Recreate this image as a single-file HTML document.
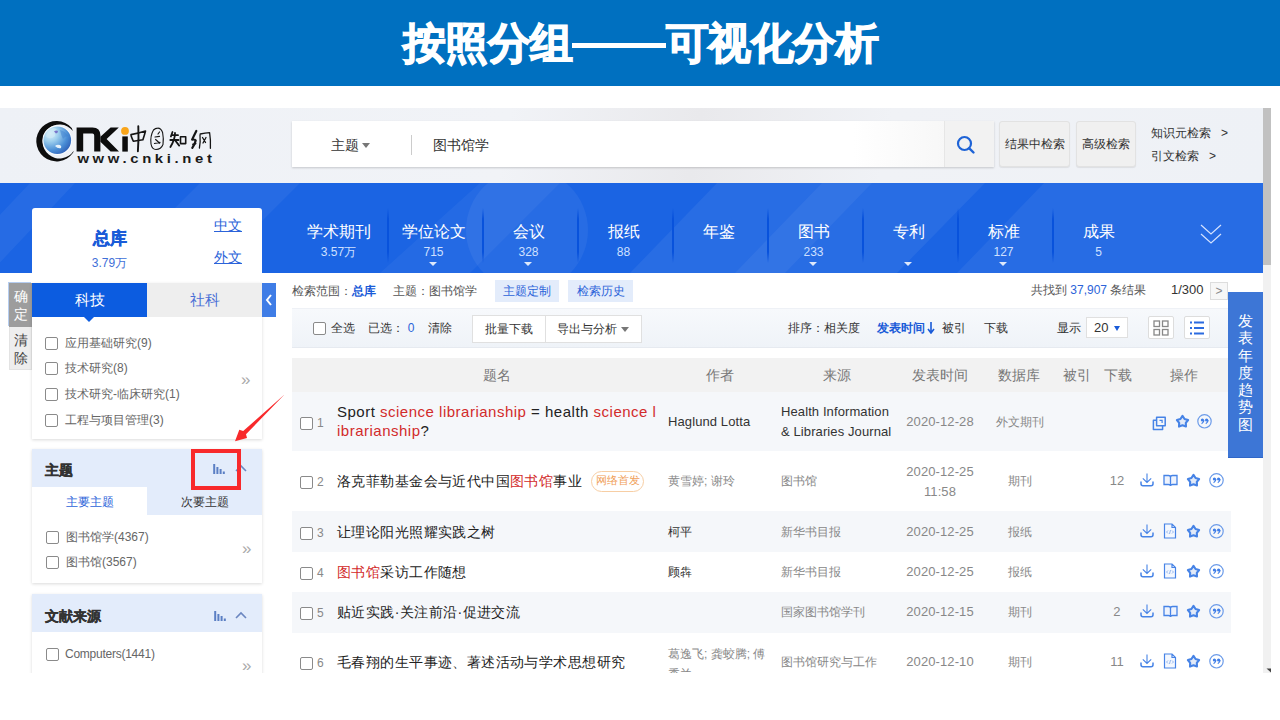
<!DOCTYPE html>
<html><head><meta charset="utf-8">
<style>
*{margin:0;padding:0;box-sizing:border-box}
html,body{width:1280px;height:720px;overflow:hidden;background:#fff;font-family:"Liberation Sans",sans-serif;color:#333}
.a{position:absolute;white-space:nowrap}
#title{left:0;top:0;width:1280px;height:86px;background:#0070c0}
.tl{color:#fff;font-weight:bold;font-size:43px;line-height:86px;letter-spacing:-.6px;-webkit-text-stroke:1.2px #fff}
#shot{left:0;top:0;width:1280px;height:673px;overflow:hidden}
#hdr{left:0;top:108px;width:1263px;height:75px;background:linear-gradient(100deg,#eef1f6 0%,#f1f3f7 40%,#e9e9ec 55%,#f0f2f6 70%,#eef1f6 100%)}
#nav{left:0;top:183px;width:1263px;height:90px;background:#1b64e3;overflow:hidden}
#sb{left:1263px;top:108px;width:8px;height:565px;background:#f1f1f1}
#sbt{left:1263px;top:108px;width:8px;height:157px;background:#c1c1c1}
.navi{top:0;width:95px;height:90px;text-align:center;color:#fff}
.navi .l{position:absolute;left:0;width:95px;top:40px;font-size:16px;line-height:18px}
.navi .n{position:absolute;left:0;width:95px;top:61.5px;font-size:12px;line-height:14px;color:#cfe0ff}
.navi .tri{position:absolute;left:43px;top:79px;width:0;height:0;border-left:4.5px solid transparent;border-right:4.5px solid transparent;border-top:4.5px solid rgba(255,255,255,.85)}
.sep{top:25px;width:2px;height:55px;margin-left:-0.5px;background:linear-gradient(180deg,rgba(8,80,220,0),#0852dc 20%,#0852dc 80%,rgba(8,80,220,0))}
.cb{width:13px;height:13px;border:1px solid #8a8a8a;border-radius:2px;background:#fff}
.it{font-size:12px;line-height:18px;color:#666}
.dbl{font-size:17px;line-height:16px;color:#aaa}
.th{top:366px;font-size:14px;line-height:18px;color:#777}
.num{font-size:12px;line-height:18px;color:#888}
.tt{font-size:14px;letter-spacing:.42px;line-height:18px;color:#222}
.td{font-size:12px;line-height:18px;color:#888}
.dk{color:#333}
.en{font-size:13px;letter-spacing:.1px}
.it.cp{letter-spacing:-.25px}
</style></head><body>
<div id="shot" class="a">
  <div id="hdr" class="a"></div>
  <svg class="a" style="left:30px;top:115px" width="190" height="55" viewBox="30 115 190 55">
    <defs><radialGradient id="gl" cx="0.25" cy="0.25" r="0.95"><stop offset="0" stop-color="#e2f3fb"/><stop offset="0.3" stop-color="#9fd0ee"/><stop offset="0.65" stop-color="#4a8ed6"/><stop offset="1" stop-color="#2752ad"/></radialGradient></defs>
    <path d="M71.75 127.95 A20.2 20.2 0 1 0 73.05 152.8 L73.76 150.76 A17 17 0 1 1 72.9 131 Z" fill="#0d0d0d"/>
    <circle cx="57.3" cy="140.3" r="14.8" fill="#f8fbfe"/><circle cx="57.3" cy="140.3" r="13.8" fill="url(#gl)"/>
    <path d="M46 136 q2-6 7-8 q3 0 4 2 q-3 3-2 6 q-3 3-6 2 q-2 0-3-2z" fill="#cfe9f7" opacity=".7"/><path d="M60 130 q5 1 8 6 q-3 0-5 3 q-2-4-3-9z" fill="#3d7fd0" opacity=".5"/>
    <path d="M55 146 q2-2 5-1 q2 1 1 3 q-3 1-6-2z" fill="#e6f2fb"/>
    <path d="M54 131.5 q2-1.5 4-.5 q0 2-2 2.5z" fill="#6a5bc0" opacity=".8"/>
    <path d="M76.6 151.6 V127.4 H92.5 Q100.4 127.4 100.4 135.5 V151.6 H94.2 V135.6 Q94.2 133.6 92.4 133.6 H83.2 V151.6 Z" fill="#0d0d0d"/>
    <path d="M100.4 136.8 L110.6 127.4 H118.8 L106.6 138.9 L119 151.6 H110.6 L100.4 141.8 Z" fill="#0d0d0d"/>
    <rect x="122.3" y="136.4" width="5.5" height="15.2" fill="#0d0d0d"/>
    <circle cx="125" cy="130.9" r="3.9" fill="#f9a51a"/>
    <g fill="none" stroke="#151515" stroke-linecap="round" stroke-linejoin="round">
      <path d="M131 135.5 q1 3 2.3 5.6 M131 134.6 q7-1.2 14.5-3.6 q-1 4-2.6 8.8 M133.5 141.2 q4.5-.6 9.5-1.4" stroke-width="1.6"/>
      <path d="M138.3 126.3 q.6 12 -.4 25" stroke-width="1.9"/>
      <path d="M153.5 130 q-3.5 6-2.5 14 q1 5.5 5 5.5 q5 0 7-5 q.8-6-.4-12 q-1.6-4.6-5-4.4 q-2.2 0-4.1 1.9z" stroke-width="1.1"/>
      <path d="M155 137 l4.5-.6 M155.6 139.5 q2.5 2 4 3.8 M158 134 l1.5 -2 M154.5 143.5 l5.5-1.2" stroke-width="1.2"/>
      <path d="M172.5 132 l-1.6 4.5 M172 135.2 h6 M170.3 140 h8.2 M175 133 q.2 6-4.6 14 M175.6 141 l3.6 4.6" stroke-width="1.8"/>
      <path d="M180.5 136.8 h5.2 v6.8 h-5.2 z" stroke-width="1.6"/>
      <path d="M196.3 131 q-2.5 5-4.2 8.6 q2.6-.4 3.6.8 q-1 4-3.4 7.4 M193.2 144.5 l2.2 -1" stroke-width="2.2"/>
      <path d="M200 135 q.6 7-.6 13 M200.2 134 q5-1 9.4-1.3 q1.2 7 .8 15.6 M202.5 137.5 l3 5 M206 137.5 l-3 5.5" stroke-width="1.3"/>
    </g>
    <text transform="translate(77.4 162.5) scale(1.18 1)" x="0" y="0" font-family="Liberation Sans" font-weight="bold" font-size="12.6" fill="#1a1a1a" textLength="114" lengthAdjust="spacing">www.cnki.net</text>
  </svg>
  <div class="a" style="left:292px;top:121px;width:702px;height:46px;background:linear-gradient(90deg,#fff 0%,#fff 80%,#f3f3f3 100%);box-shadow:0 1px 2px rgba(0,0,0,.18)"></div>
  <div class="a" style="left:331px;top:136px;font-size:14px;line-height:18px;color:#333">主题</div>
  <div class="a" style="left:362px;top:143px;width:0;height:0;border-left:4.5px solid transparent;border-right:4.5px solid transparent;border-top:5px solid #777"></div>
  <div class="a" style="left:411px;top:135px;width:1px;height:20px;background:#ccc"></div>
  <div class="a" style="left:433px;top:136px;font-size:14px;line-height:18px;color:#333">图书馆学</div>
  <div class="a" style="left:944px;top:121px;width:50px;height:46px;background:#f2f2f2;border-left:1px solid #e6e6e6;border-radius:0 3px 3px 0"></div>
  <svg class="a" style="left:955px;top:134px" width="22" height="22" viewBox="0 0 22 22"><circle cx="9.5" cy="9.5" r="6.5" fill="none" stroke="#1e63d6" stroke-width="2.2"/><path d="M14.3 14.3 L18.5 18.5" stroke="#1e63d6" stroke-width="2.4" stroke-linecap="round"/></svg>
  <div class="a" style="left:999px;top:121px;width:71px;height:46px;background:#f0f0f0;border:1px solid #e2e2e2;border-radius:3px;box-shadow:0 1px 1px rgba(0,0,0,.08);font-size:12px;line-height:44px;text-align:center;color:#333">结果中检索</div>
  <div class="a" style="left:1076px;top:121px;width:60px;height:46px;background:#f0f0f0;border:1px solid #e2e2e2;border-radius:3px;box-shadow:0 1px 1px rgba(0,0,0,.08);font-size:12px;line-height:44px;text-align:center;color:#333">高级检索</div>
  <div class="a" style="left:1151px;top:125px;font-size:12px;line-height:16px;color:#333">知识元检索&nbsp;&nbsp;&nbsp;&gt;</div>
  <div class="a" style="left:1151px;top:148px;font-size:12px;line-height:16px;color:#333">引文检索&nbsp;&nbsp;&nbsp;&gt;</div>
  <div id="nav" class="a">
    <div class="a" style="left:0;top:0;width:1263px;height:90px;background:rgba(255,255,255,0.05);clip-path:polygon(30px 0,75px 0,-10px 90px,-55px 90px)"></div>
    <div class="a" style="left:0;top:0;width:1263px;height:90px;background:rgba(255,255,255,0.05);clip-path:polygon(200px 0,300px 0,210px 90px,110px 90px)"></div>
    <div class="a" style="left:466px;top:-14px;width:122px;height:122px;border-radius:50%;background:rgba(255,255,255,.055)"></div>
    <div class="a" style="left:0;top:0;width:1263px;height:90px;background:rgba(255,255,255,.045);clip-path:polygon(480px 0,560px 0,470px 90px,380px 90px)"></div>
    <div class="a" style="left:0;top:0;width:1263px;height:90px;background:rgba(255,255,255,0.06);clip-path:polygon(717px 0,985px 0,897px 90px,630px 90px)"></div>
    <div class="a" style="left:0;top:0;width:1263px;height:90px;background:rgba(255,255,255,0.05);clip-path:polygon(822px 0,872px 0,785px 90px,735px 90px)"></div>
    <div class="a" style="left:0;top:0;width:1263px;height:90px;background:rgba(255,255,255,0.055);clip-path:polygon(1044px 0,1263px 0,1263px 90px,957px 90px)"></div>
    <div class="a navi" style="left:291px"><div class="l">学术期刊</div><div class="n">3.57万</div></div>
    <div class="a navi" style="left:386px"><div class="l">学位论文</div><div class="n">715</div><div class="tri"></div></div>
    <div class="a sep" style="left:387px"></div>
    <div class="a navi" style="left:481px"><div class="l">会议</div><div class="n">328</div><div class="tri"></div></div>
    <div class="a sep" style="left:482px"></div>
    <div class="a navi" style="left:576px"><div class="l">报纸</div><div class="n">88</div></div>
    <div class="a sep" style="left:577px"></div>
    <div class="a navi" style="left:671px"><div class="l">年鉴</div></div>
    <div class="a sep" style="left:672px"></div>
    <div class="a navi" style="left:766px"><div class="l">图书</div><div class="n">233</div><div class="tri"></div></div>
    <div class="a sep" style="left:767px"></div>
    <div class="a navi" style="left:861px"><div class="l">专利</div><div class="tri"></div></div>
    <div class="a sep" style="left:862px"></div>
    <div class="a navi" style="left:956px"><div class="l">标准</div><div class="n">127</div><div class="tri"></div></div>
    <div class="a sep" style="left:957px"></div>
    <div class="a navi" style="left:1051px"><div class="l">成果</div><div class="n">5</div></div>
    <div class="a sep" style="left:1052px"></div>
    <svg class="a" style="left:1199px;top:39px" width="24" height="24" viewBox="0 0 24 24"><path d="M2 3 L12 12 L22 3 M2 12 L12 21 L22 12" fill="none" stroke="#d4e2ff" stroke-width="1.2"/></svg>
  </div>
  <!-- card -->
  <div class="a" style="left:32px;top:208px;width:230px;height:75px;background:#fff;border-radius:3px 3px 0 0"></div>
  <div class="a" style="left:92px;top:229px;width:35px;text-align:center;font-size:17px;line-height:20px;font-weight:bold;color:#1a5bd8;-webkit-text-stroke:.4px #1a5bd8">总库</div>
  <div class="a" style="left:82px;top:255px;width:55px;text-align:center;font-size:12px;line-height:16px;color:#3e6fd8">3.79万</div>
  <div class="a" style="left:214px;top:216px;font-size:14px;line-height:18px;color:#2b63d9;text-decoration:underline">中文</div>
  <div class="a" style="left:214px;top:248px;font-size:14px;line-height:18px;color:#2b63d9;text-decoration:underline">外文</div>
  <!-- left mini buttons -->
  <div class="a" style="left:9px;top:283px;width:23px;height:44px;background:#9d9d9d;box-shadow:-1px -1px 0 #b5cdf0;color:#fff;font-size:14px;line-height:18px;text-align:center;padding-top:4px;white-space:normal">确<br>定</div>
  <div class="a" style="left:9px;top:327px;width:23px;height:43px;background:#eeeeee;color:#444;font-size:14px;line-height:18px;text-align:center;padding-top:4px;border:1px solid #e3e3e3;border-top:0">清<br>除</div>
  <!-- panel 1 -->
  <div class="a" style="left:32px;top:283px;width:230px;height:156px;background:#fff;box-shadow:0 1px 3px rgba(0,0,0,.15)"></div>
  <div class="a" style="left:32px;top:283px;width:115px;height:34px;background:#0c5ce0;color:#fff;font-size:15px;line-height:34px;text-align:center">科技</div>
  <div class="a" style="left:84px;top:317px;width:0;height:0;border-left:5px solid transparent;border-right:5px solid transparent;border-top:5px solid #0c5ce0"></div>
  <div class="a" style="left:147px;top:283px;width:115px;height:34px;background:#eeeeee;color:#4a6fd6;font-size:15px;line-height:34px;text-align:center">社科</div>
  <div class="a" style="left:262px;top:283px;width:14px;height:34px;background:#3f7de6"></div>
  <svg class="a" style="left:262px;top:283px" width="14" height="34" viewBox="0 0 14 34"><path d="M9 12 L5 17 L9 22" fill="none" stroke="#fff" stroke-width="2"/></svg>
  <div class="a cb" style="left:45px;top:337px"></div><div class="a it" style="left:65px;top:334px">应用基础研究(9)</div>
  <div class="a cb" style="left:45px;top:362px"></div><div class="a it" style="left:65px;top:359px">技术研究(8)</div>
  <div class="a cb" style="left:45px;top:388px"></div><div class="a it" style="left:65px;top:385px">技术研究-临床研究(1)</div>
  <div class="a cb" style="left:45px;top:414px"></div><div class="a it" style="left:65px;top:411px">工程与项目管理(3)</div>
  <div class="a dbl" style="left:241px;top:372px">&raquo;</div>
  <!-- panel 2 -->
  <div class="a" style="left:32px;top:449px;width:230px;height:134px;background:#fff;box-shadow:0 1px 3px rgba(0,0,0,.15)"></div>
  <div class="a" style="left:32px;top:449px;width:230px;height:38px;background:#e3ecfb"></div>
  <div class="a" style="left:45px;top:460px;font-size:14px;line-height:20px;font-weight:bold;color:#333;-webkit-text-stroke:.3px #333">主题</div>
  <svg class="a bars" style="left:213px;top:464px" width="13" height="10" viewBox="0 0 13 10"><path d="M1.2 0v10M4.4 3v7M7.6 5v5M10.8 7.5v2.5" stroke="#5b7fc4" stroke-width="2"/></svg>
  <svg class="a" style="left:235px;top:464px" width="12" height="8" viewBox="0 0 12 8"><path d="M1 7 L6 2 L11 7" fill="none" stroke="#6b86c0" stroke-width="1.6"/></svg>
  <div class="a" style="left:32px;top:487px;width:115px;height:28px;background:#fff;color:#2b63d9;font-size:12px;line-height:30px;text-align:center">主要主题</div>
  <div class="a" style="left:147px;top:487px;width:115px;height:28px;background:#e3ecfb;color:#333;font-size:12px;line-height:30px;text-align:center">次要主题</div>
  <div class="a cb" style="left:46px;top:531px"></div><div class="a it" style="left:66px;top:528px">图书馆学(4367)</div>
  <div class="a cb" style="left:46px;top:556px"></div><div class="a it" style="left:66px;top:553px">图书馆(3567)</div>
  <div class="a dbl" style="left:242px;top:541px">&raquo;</div>
  <div class="a" style="left:191px;top:449px;width:50px;height:41px;border:4px solid #f8292b"></div>
  <!-- panel 3 -->
  <div class="a" style="left:32px;top:594px;width:230px;height:120px;background:#fff;box-shadow:0 1px 3px rgba(0,0,0,.15)"></div>
  <div class="a" style="left:32px;top:594px;width:230px;height:38px;background:#e3ecfb"></div>
  <div class="a" style="left:45px;top:606px;font-size:14px;line-height:20px;font-weight:bold;color:#333;-webkit-text-stroke:.3px #333">文献来源</div>
  <svg class="a bars" style="left:214px;top:611px" width="13" height="10" viewBox="0 0 13 10"><path d="M1.2 0v10M4.4 3v7M7.6 5v5M10.8 7.5v2.5" stroke="#5b7fc4" stroke-width="2"/></svg>
  <svg class="a" style="left:235px;top:611px" width="12" height="8" viewBox="0 0 12 8"><path d="M1 7 L6 2 L11 7" fill="none" stroke="#6b86c0" stroke-width="1.6"/></svg>
  <div class="a cb" style="left:46px;top:648px"></div><div class="a it cp" style="left:65px;top:645px">Computers(1441)</div>
  <div class="a dbl" style="left:242px;top:658px">&raquo;</div>
  <!-- red arrow -->
  <svg class="a" style="left:225px;top:385px" width="70" height="65" viewBox="225 385 70 65"><path d="M284.5 394.5 L246 434.3 L247 438 L235 441.3 L239.3 429.8 L243.2 431 Z" fill="#f8292b"/></svg>
  <!-- content -->
  <div class="a" style="left:292px;top:283px;font-size:12px;line-height:16px;color:#555">检索范围：<b style="color:#1a5bd8">总库</b>&nbsp;&nbsp;&nbsp;&nbsp;&nbsp;主题：图书馆学</div>
  <div class="a" style="left:495px;top:280px;width:64px;height:22px;background:#e3ecfb;color:#2b63d9;font-size:12px;line-height:22px;text-align:center">主题定制</div>
  <div class="a" style="left:568px;top:280px;width:65px;height:22px;background:#e3ecfb;color:#2b63d9;font-size:12px;line-height:22px;text-align:center">检索历史</div>
  <div class="a" style="left:1031px;top:282px;font-size:12px;line-height:16px;color:#555">共找到 <span style="color:#2b63d9">37,907</span> 条结果</div>
  <div class="a" style="left:1171px;top:282px;font-size:13px;line-height:16px;color:#333">1/300</div>
  <div class="a" style="left:1210px;top:282px;width:18px;height:18px;border:1px solid #ddd;background:#f7f7f7;color:#888;font-size:12px;line-height:16px;text-align:center">&gt;</div>
  <!-- toolbar -->
  <div class="a" style="left:292px;top:308px;width:936px;height:40px;background:linear-gradient(180deg,#f7f9fc,#eff3f8);border-top:1px solid #eef1f6;border-bottom:1px solid #e6eaf0"></div>
  <div class="a cb" style="left:313px;top:322px"></div>
  <div class="a" style="left:331px;top:320px;font-size:12px;line-height:16px;color:#333">全选&nbsp;&nbsp;&nbsp;&nbsp;已选：&nbsp;<span style="color:#2b63d9">0</span>&nbsp;&nbsp;&nbsp;&nbsp;清除</div>
  <div class="a" style="left:472px;top:315px;width:74px;height:28px;background:#fff;border:1px solid #e0e0e0;font-size:12px;line-height:26px;text-align:center;color:#333">批量下载</div>
  <div class="a" style="left:545px;top:315px;width:97px;height:28px;background:#fff;border:1px solid #e0e0e0;font-size:12px;line-height:26px;color:#333;padding-left:11px">导出与分析</div>
  <div class="a" style="left:621px;top:327px;width:0;height:0;border-left:4px solid transparent;border-right:4px solid transparent;border-top:5px solid #777"></div>
  <div class="a" style="left:788px;top:320px;font-size:12px;line-height:16px;color:#333">排序：相关度</div>
  <div class="a" style="left:877px;top:320px;font-size:12px;line-height:16px;color:#1a5bd8;font-weight:bold">发表时间</div>
  <svg class="a" style="left:927px;top:322px" width="8" height="12" viewBox="0 0 8 12"><path d="M4 0v10M1 7l3 4 3-4" fill="none" stroke="#1a5bd8" stroke-width="1.6"/></svg>
  <div class="a" style="left:942px;top:320px;font-size:12px;line-height:16px;color:#333">被引</div>
  <div class="a" style="left:984px;top:320px;font-size:12px;line-height:16px;color:#333">下载</div>
  <div class="a" style="left:1057px;top:320px;font-size:12px;line-height:16px;color:#333">显示</div>
  <div class="a" style="left:1086px;top:317px;width:42px;height:21px;background:#fff;border:1px solid #e0e0e0;font-size:13px;line-height:20px;color:#333;padding-left:7px">20</div>
  <div class="a" style="left:1114px;top:326px;width:0;height:0;border-left:3.5px solid transparent;border-right:3.5px solid transparent;border-top:5px solid #1a5bd8"></div>
  <div class="a" style="left:1148px;top:316px;width:26px;height:23px;background:#fff;border:1px solid #ddd;border-radius:2px"></div>
  <svg class="a" style="left:1153px;top:320px" width="16" height="16" viewBox="0 0 16 16"><rect x="1" y="1" width="5.5" height="5.5" fill="none" stroke="#888" stroke-width="1.3"/><rect x="9.5" y="1" width="5.5" height="5.5" fill="none" stroke="#888" stroke-width="1.3"/><rect x="1" y="9.5" width="5.5" height="5.5" fill="none" stroke="#888" stroke-width="1.3"/><rect x="9.5" y="9.5" width="5.5" height="5.5" fill="none" stroke="#888" stroke-width="1.3"/></svg>
  <div class="a" style="left:1184px;top:316px;width:26px;height:23px;background:#fff;border:1px solid #ddd;border-radius:2px"></div>
  <svg class="a" style="left:1189px;top:320px" width="16" height="16" viewBox="0 0 16 16"><path d="M1 2.5h2M5 2.5h10M1 8h2M5 8h10M1 13.5h2M5 13.5h10" stroke="#2b6be0" stroke-width="2"/></svg>
  <!-- rows -->
  <div class="a" style="left:292px;top:392px;width:939px;height:59px;background:#f5f7fa"></div>
  <div class="a" style="left:292px;top:511px;width:939px;height:41px;background:#f5f7fa"></div>
  <div class="a" style="left:292px;top:592px;width:939px;height:41px;background:#f5f7fa"></div>
  <div class="a cb" style="left:300px;top:417px"></div>
  <div class="a num" style="left:317px;top:414px">1</div>
  <div class="a tt" style="left:337px;top:402px;line-height:19px;font-size:15px;letter-spacing:.5px">Sport <span style="color:#d22b2b">science librarianship</span> = health <span style="color:#d22b2b">science l</span><br><span style="color:#d22b2b">ibrarianship</span>?</div>
  <div class="a td dk en" style="left:668px;top:413px;">Haglund Lotta</div>
  <div class="a td dk en" style="left:781px;top:402px;line-height:20px">Health Information<br>&amp; Libraries Journal</div>
  <div class="a td en" style="left:890px;width:100px;text-align:center;top:413px">2020-12-28</div>
  <div class="a td" style="left:970px;width:100px;text-align:center;top:413px">外文期刊</div>
  <svg class="a" style="left:1152px;top:416px" width="15" height="15" viewBox="0 0 15 15"><path d="M4.6 1.2h8.6v8.6H4.6z" fill="none" stroke="#4683e6" stroke-width="1.5" stroke-linejoin="round"/><path d="M4.6 4.3H1.4v9.2h9.2V9.8" fill="none" stroke="#4683e6" stroke-width="1.5" stroke-linejoin="round"/><path d="M7.5 4.3h2.6v2.6" fill="none" stroke="#4683e6" stroke-width="1.2"/></svg>
  <svg class="a" style="left:1175px;top:414px" width="15" height="15" viewBox="0 0 15 15"><path d="M7.50 1.90 L9.56 4.97 L13.11 5.98 L10.83 8.88 L10.97 12.57 L7.50 11.30 L4.03 12.57 L4.17 8.88 L1.89 5.98 L5.44 4.97Z" fill="#e2eaf8" stroke="#4683e6" stroke-width="2.1" stroke-linejoin="round"/></svg>
  <svg class="a" style="left:1197px;top:414px" width="15" height="15" viewBox="0 0 15 15"><circle cx="7.5" cy="7.3" r="6.7" fill="none" stroke="#6b9be9" stroke-width="1.2"/><circle cx="5.4" cy="6" r="1.6" fill="#3f7ee8"/><circle cx="9.6" cy="6" r="1.6" fill="#3f7ee8"/><path d="M6.9 6.1q0 2.4-2.3 3.6M11.1 6.1q0 2.4-2.3 3.6" fill="none" stroke="#3f7ee8" stroke-width="1.2"/></svg>
  <div class="a cb" style="left:300px;top:476px"></div>
  <div class="a num" style="left:317px;top:473px">2</div>
  <div class="a tt" style="left:337px;top:472px;">洛克菲勒基金会与近代中国<span style="color:#d22b2b">图书馆</span>事业</div>
  <div class="a" style="left:591px;top:471px;width:53px;height:20.5px;border:1.5px solid #f7cea4;border-radius:11px;color:#f0a058;font-size:11px;line-height:17.5px;text-align:center">网络首发</div>
  <div class="a td" style="left:668px;top:472px;">黄雪婷; 谢玲</div>
  <div class="a td" style="left:781px;top:472px;">图书馆</div>
  <div class="a td en" style="left:890px;width:100px;text-align:center;top:462px;line-height:20px">2020-12-25<br>11:58</div>
  <div class="a td" style="left:970px;width:100px;text-align:center;top:472px">期刊</div>
  <div class="a td en" style="left:1092px;width:50px;text-align:center;top:472px">12</div>
  <svg class="a" style="left:1140px;top:473px" width="14" height="14" viewBox="0 0 14 14"><path d="M7 0.5v9M2.8 5.3l4.2 4.2 4.2-4.2" fill="none" stroke="#4683e6" stroke-width="1.1"/><path d="M1 8.6v2.2q0 2 2 2h8q2 0 2-2V8.6" fill="none" stroke="#4683e6" stroke-width="1.5"/></svg>
  <svg class="a" style="left:1163px;top:473px" width="15" height="14" viewBox="0 0 15 14"><path d="M1 2.5h4.5q2 0 2 2v8.5q0-1.5-2-1.5H1zM14 2.5H9.5q-2 0-2 2v8.5q0-1.5 2-1.5H14z" fill="#eef3fd" stroke="#4683e6" stroke-width="1.3"/></svg>
  <svg class="a" style="left:1186px;top:473px" width="15" height="15" viewBox="0 0 15 15"><path d="M7.50 1.90 L9.56 4.97 L13.11 5.98 L10.83 8.88 L10.97 12.57 L7.50 11.30 L4.03 12.57 L4.17 8.88 L1.89 5.98 L5.44 4.97Z" fill="#e2eaf8" stroke="#4683e6" stroke-width="2.1" stroke-linejoin="round"/></svg>
  <svg class="a" style="left:1209px;top:473px" width="15" height="15" viewBox="0 0 15 15"><circle cx="7.5" cy="7.3" r="6.7" fill="none" stroke="#6b9be9" stroke-width="1.2"/><circle cx="5.4" cy="6" r="1.6" fill="#3f7ee8"/><circle cx="9.6" cy="6" r="1.6" fill="#3f7ee8"/><path d="M6.9 6.1q0 2.4-2.3 3.6M11.1 6.1q0 2.4-2.3 3.6" fill="none" stroke="#3f7ee8" stroke-width="1.2"/></svg>
  <div class="a cb" style="left:300px;top:527px"></div>
  <div class="a num" style="left:317px;top:524px">3</div>
  <div class="a tt" style="left:337px;top:523px;">让理论阳光照耀实践之树</div>
  <div class="a td dk" style="left:668px;top:523px;">柯平</div>
  <div class="a td" style="left:781px;top:523px;">新华书目报</div>
  <div class="a td en" style="left:890px;width:100px;text-align:center;top:523px">2020-12-25</div>
  <div class="a td" style="left:970px;width:100px;text-align:center;top:523px">报纸</div>
  <svg class="a" style="left:1140px;top:524px" width="14" height="14" viewBox="0 0 14 14"><path d="M7 0.5v9M2.8 5.3l4.2 4.2 4.2-4.2" fill="none" stroke="#4683e6" stroke-width="1.1"/><path d="M1 8.6v2.2q0 2 2 2h8q2 0 2-2V8.6" fill="none" stroke="#4683e6" stroke-width="1.5"/></svg>
  <svg class="a" style="left:1163px;top:523px" width="14" height="16" viewBox="0 0 14 16"><path d="M1.5 1h7.5l3.5 3.5v10.5h-11z M9 1v3.5h3.5" fill="#f4f8fe" stroke="#4683e6" stroke-width="1.2"/><path d="M5 7.5l-1.5 1.5 1.5 1.5M9 7.5l1.5 1.5-1.5 1.5M7.5 7l-1 4" fill="none" stroke="#7aa3e8" stroke-width=".8"/></svg>
  <svg class="a" style="left:1186px;top:524px" width="15" height="15" viewBox="0 0 15 15"><path d="M7.50 1.90 L9.56 4.97 L13.11 5.98 L10.83 8.88 L10.97 12.57 L7.50 11.30 L4.03 12.57 L4.17 8.88 L1.89 5.98 L5.44 4.97Z" fill="#e2eaf8" stroke="#4683e6" stroke-width="2.1" stroke-linejoin="round"/></svg>
  <svg class="a" style="left:1209px;top:524px" width="15" height="15" viewBox="0 0 15 15"><circle cx="7.5" cy="7.3" r="6.7" fill="none" stroke="#6b9be9" stroke-width="1.2"/><circle cx="5.4" cy="6" r="1.6" fill="#3f7ee8"/><circle cx="9.6" cy="6" r="1.6" fill="#3f7ee8"/><path d="M6.9 6.1q0 2.4-2.3 3.6M11.1 6.1q0 2.4-2.3 3.6" fill="none" stroke="#3f7ee8" stroke-width="1.2"/></svg>
  <div class="a cb" style="left:300px;top:567px"></div>
  <div class="a num" style="left:317px;top:564px">4</div>
  <div class="a tt" style="left:337px;top:563px;"><span style="color:#d22b2b">图书馆</span>采访工作随想</div>
  <div class="a td dk" style="left:668px;top:563px;">顾犇</div>
  <div class="a td" style="left:781px;top:563px;">新华书目报</div>
  <div class="a td en" style="left:890px;width:100px;text-align:center;top:563px">2020-12-25</div>
  <div class="a td" style="left:970px;width:100px;text-align:center;top:563px">报纸</div>
  <svg class="a" style="left:1140px;top:564px" width="14" height="14" viewBox="0 0 14 14"><path d="M7 0.5v9M2.8 5.3l4.2 4.2 4.2-4.2" fill="none" stroke="#4683e6" stroke-width="1.1"/><path d="M1 8.6v2.2q0 2 2 2h8q2 0 2-2V8.6" fill="none" stroke="#4683e6" stroke-width="1.5"/></svg>
  <svg class="a" style="left:1163px;top:563px" width="14" height="16" viewBox="0 0 14 16"><path d="M1.5 1h7.5l3.5 3.5v10.5h-11z M9 1v3.5h3.5" fill="#f4f8fe" stroke="#4683e6" stroke-width="1.2"/><path d="M5 7.5l-1.5 1.5 1.5 1.5M9 7.5l1.5 1.5-1.5 1.5M7.5 7l-1 4" fill="none" stroke="#7aa3e8" stroke-width=".8"/></svg>
  <svg class="a" style="left:1186px;top:564px" width="15" height="15" viewBox="0 0 15 15"><path d="M7.50 1.90 L9.56 4.97 L13.11 5.98 L10.83 8.88 L10.97 12.57 L7.50 11.30 L4.03 12.57 L4.17 8.88 L1.89 5.98 L5.44 4.97Z" fill="#e2eaf8" stroke="#4683e6" stroke-width="2.1" stroke-linejoin="round"/></svg>
  <svg class="a" style="left:1209px;top:564px" width="15" height="15" viewBox="0 0 15 15"><circle cx="7.5" cy="7.3" r="6.7" fill="none" stroke="#6b9be9" stroke-width="1.2"/><circle cx="5.4" cy="6" r="1.6" fill="#3f7ee8"/><circle cx="9.6" cy="6" r="1.6" fill="#3f7ee8"/><path d="M6.9 6.1q0 2.4-2.3 3.6M11.1 6.1q0 2.4-2.3 3.6" fill="none" stroke="#3f7ee8" stroke-width="1.2"/></svg>
  <div class="a cb" style="left:300px;top:607px"></div>
  <div class="a num" style="left:317px;top:604px">5</div>
  <div class="a tt" style="left:337px;top:603px;">贴近实践·关注前沿·促进交流</div>
  <div class="a td" style="left:781px;top:603px;">国家图书馆学刊</div>
  <div class="a td en" style="left:890px;width:100px;text-align:center;top:603px">2020-12-15</div>
  <div class="a td" style="left:970px;width:100px;text-align:center;top:603px">期刊</div>
  <div class="a td en" style="left:1092px;width:50px;text-align:center;top:603px">2</div>
  <svg class="a" style="left:1140px;top:604px" width="14" height="14" viewBox="0 0 14 14"><path d="M7 0.5v9M2.8 5.3l4.2 4.2 4.2-4.2" fill="none" stroke="#4683e6" stroke-width="1.1"/><path d="M1 8.6v2.2q0 2 2 2h8q2 0 2-2V8.6" fill="none" stroke="#4683e6" stroke-width="1.5"/></svg>
  <svg class="a" style="left:1163px;top:604px" width="15" height="14" viewBox="0 0 15 14"><path d="M1 2.5h4.5q2 0 2 2v8.5q0-1.5-2-1.5H1zM14 2.5H9.5q-2 0-2 2v8.5q0-1.5 2-1.5H14z" fill="#eef3fd" stroke="#4683e6" stroke-width="1.3"/></svg>
  <svg class="a" style="left:1186px;top:604px" width="15" height="15" viewBox="0 0 15 15"><path d="M7.50 1.90 L9.56 4.97 L13.11 5.98 L10.83 8.88 L10.97 12.57 L7.50 11.30 L4.03 12.57 L4.17 8.88 L1.89 5.98 L5.44 4.97Z" fill="#e2eaf8" stroke="#4683e6" stroke-width="2.1" stroke-linejoin="round"/></svg>
  <svg class="a" style="left:1209px;top:604px" width="15" height="15" viewBox="0 0 15 15"><circle cx="7.5" cy="7.3" r="6.7" fill="none" stroke="#6b9be9" stroke-width="1.2"/><circle cx="5.4" cy="6" r="1.6" fill="#3f7ee8"/><circle cx="9.6" cy="6" r="1.6" fill="#3f7ee8"/><path d="M6.9 6.1q0 2.4-2.3 3.6M11.1 6.1q0 2.4-2.3 3.6" fill="none" stroke="#3f7ee8" stroke-width="1.2"/></svg>
  <div class="a cb" style="left:300px;top:657px"></div>
  <div class="a num" style="left:317px;top:654px">6</div>
  <div class="a tt" style="left:337px;top:653px;">毛春翔的生平事迹、著述活动与学术思想研究</div>
  <div class="a td" style="left:668px;top:644px;line-height:20px">葛逸飞; 龚蛟腾; 傅<br>秀兰</div>
  <div class="a td" style="left:781px;top:653px;">图书馆研究与工作</div>
  <div class="a td en" style="left:890px;width:100px;text-align:center;top:653px">2020-12-10</div>
  <div class="a td" style="left:970px;width:100px;text-align:center;top:653px">期刊</div>
  <div class="a td en" style="left:1092px;width:50px;text-align:center;top:653px">11</div>
  <svg class="a" style="left:1140px;top:654px" width="14" height="14" viewBox="0 0 14 14"><path d="M7 0.5v9M2.8 5.3l4.2 4.2 4.2-4.2" fill="none" stroke="#4683e6" stroke-width="1.1"/><path d="M1 8.6v2.2q0 2 2 2h8q2 0 2-2V8.6" fill="none" stroke="#4683e6" stroke-width="1.5"/></svg>
  <svg class="a" style="left:1163px;top:653px" width="14" height="16" viewBox="0 0 14 16"><path d="M1.5 1h7.5l3.5 3.5v10.5h-11z M9 1v3.5h3.5" fill="#f4f8fe" stroke="#4683e6" stroke-width="1.2"/><path d="M5 7.5l-1.5 1.5 1.5 1.5M9 7.5l1.5 1.5-1.5 1.5M7.5 7l-1 4" fill="none" stroke="#7aa3e8" stroke-width=".8"/></svg>
  <svg class="a" style="left:1186px;top:654px" width="15" height="15" viewBox="0 0 15 15"><path d="M7.50 1.90 L9.56 4.97 L13.11 5.98 L10.83 8.88 L10.97 12.57 L7.50 11.30 L4.03 12.57 L4.17 8.88 L1.89 5.98 L5.44 4.97Z" fill="#e2eaf8" stroke="#4683e6" stroke-width="2.1" stroke-linejoin="round"/></svg>
  <svg class="a" style="left:1209px;top:654px" width="15" height="15" viewBox="0 0 15 15"><circle cx="7.5" cy="7.3" r="6.7" fill="none" stroke="#6b9be9" stroke-width="1.2"/><circle cx="5.4" cy="6" r="1.6" fill="#3f7ee8"/><circle cx="9.6" cy="6" r="1.6" fill="#3f7ee8"/><path d="M6.9 6.1q0 2.4-2.3 3.6M11.1 6.1q0 2.4-2.3 3.6" fill="none" stroke="#3f7ee8" stroke-width="1.2"/></svg>
  <!-- vertical tab -->
  <div class="a" style="left:1228px;top:292px;width:35px;height:166px;background:#3d76d6;border-bottom:1px solid #2f66c8;color:#fff;font-size:15px;line-height:17.3px;text-align:center;padding-top:20px;white-space:normal">发<br>表<br>年<br>度<br>趋<br>势<br>图</div>
  <!-- table header -->
  <div class="a" style="left:292px;top:358px;width:936px;height:34px;background:#f2f2f2"></div>
  <div class="a th" style="left:483px">题名</div>
  <div class="a th" style="left:706px">作者</div>
  <div class="a th" style="left:823px">来源</div>
  <div class="a th" style="left:912px">发表时间</div>
  <div class="a th" style="left:998px">数据库</div>
  <div class="a th" style="left:1063px">被引</div>
  <div class="a th" style="left:1104px">下载</div>
  <div class="a th" style="left:1170px">操作</div>
  <div id="sb" class="a"></div>
  <div id="sbt" class="a"></div>
  <svg class="a" style="left:1266px;top:668px" width="6" height="5" viewBox="0 0 6 5"><path d="M0.5 0.5 L5 0.5 L5 4.5Z" fill="#444"/></svg>
</div>
<div id="title" class="a"></div>
<div class="a tl" style="left:403px;top:0">按照分组</div>
<div class="a" style="left:572px;top:42.8px;width:94px;height:5px;background:#fff"></div>
<div class="a tl" style="left:666px;top:0">可视化分析</div>
</body></html>
